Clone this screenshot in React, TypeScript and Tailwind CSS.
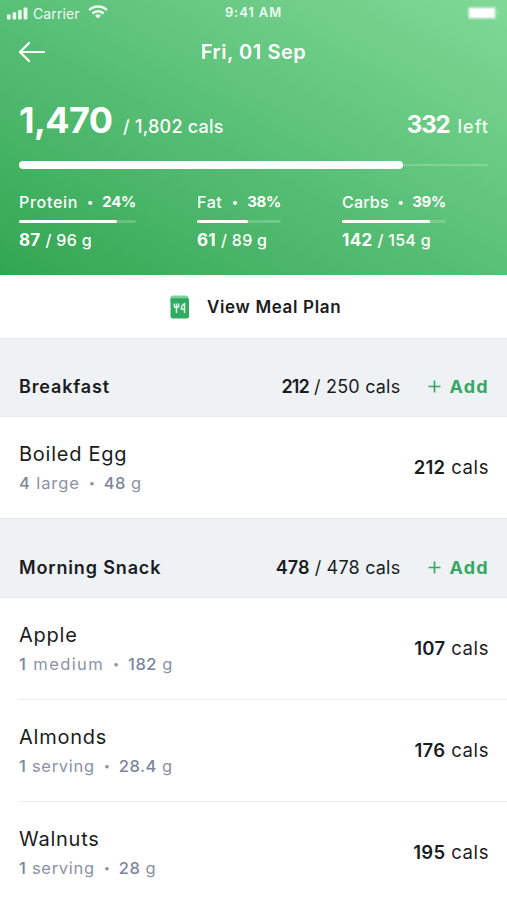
const macros = [
  { id: 1, name: 'Protein', percent: '24%', value: '87', goal: '/ 96 g', progress: 84, box: 'w-[117px] mr-[61px]', tracking: 'tracking-[0.7px]' },
  { id: 2, name: 'Fat', percent: '38%', value: '61', goal: '/ 89 g', progress: 61, box: 'w-[84px] mr-[61px]', tracking: 'tracking-[0.6px]' },
  { id: 3, name: 'Carbs', percent: '39%', value: '142', goal: '/ 154 g', progress: 85, box: 'w-[104px]', tracking: 'tracking-[0.2px]' },
];

const meals = [
  {
    id: 1,
    name: 'Breakfast',
    eaten: '212',
    goal: '/ 250 cals',
    header: 'h-[79px]',
    eatenTracking: 'tracking-[-0.8px]',
    foods: [
      { id: 1, name: 'Boiled Egg', count: '4', unit: 'large', grams: '48', cals: '212', tracking: 'tracking-[0.9px]' },
    ],
  },
  {
    id: 2,
    name: 'Morning Snack',
    eaten: '478',
    goal: '/ 478 cals',
    header: 'h-[80px]',
    eatenTracking: 'tracking-[0.1px]',
    foods: [
      { id: 1, name: 'Apple', count: '1', unit: 'medium', grams: '182', cals: '107', tracking: 'tracking-[1.4px]' },
      { id: 2, name: 'Almonds', count: '1', unit: 'serving', grams: '28.4', cals: '176', tracking: 'tracking-[0.7px]' },
      { id: 3, name: 'Walnuts', count: '1', unit: 'serving', grams: '28', cals: '195', tracking: 'tracking-[0.7px]' },
    ],
  },
];

function StatusBar() {
  return (
    <div className="grid h-[26px] grid-cols-3 items-center px-[7px] text-white/90">
      <div className="flex items-center">
        <svg width="21" height="13" viewBox="0 0 21 13" fill="currentColor">
          <rect x="0" y="7.5" width="3.6" height="5" rx="1" />
          <rect x="5.6" y="5.2" width="3.6" height="7.3" rx="1" />
          <rect x="11.1" y="2.9" width="3.6" height="9.6" rx="1" />
          <rect x="16.6" y="0.5" width="3.8" height="12" rx="1" />
        </svg>
        <span className="ml-[5px] text-[14px] tracking-[0.1px]">Carrier</span>
        <svg className="-mt-[2px] ml-[8px]" width="20" height="14" viewBox="0 0 20 14" fill="none" stroke="currentColor" strokeWidth="2.5">
          <path d="M1.2 5.2a12.4 12.4 0 0 1 17.6 0" />
          <path d="M4.4 8.5a7.9 7.9 0 0 1 11.2 0" />
          <path d="M10 13.6 7.1 10.7a4.1 4.1 0 0 1 5.8 0z" fill="currentColor" stroke="none" />
        </svg>
      </div>
      <span className="text-center text-[13px] font-semibold tracking-[0.9px]">9:41 AM</span>
      <svg className="justify-self-end" width="33" height="14" viewBox="0 0 33 14" fill="#fff">
        <rect x="0.5" y="0.5" width="29" height="13" rx="2.5" opacity="0.4" />
        <rect x="2.5" y="2.5" width="25" height="9" rx="1" />
        <path d="M31 5c1.4.5 1.4 3.5 0 4z" opacity="0.4" />
      </svg>
    </div>
  );
}

function Summary() {
  return (
    <header className="h-[275px] bg-linear-to-tr from-[#31a652] via-[#59c077] to-[#80d997] text-white">
      <StatusBar />
      <div className="relative flex h-[52px] items-center justify-center">
        <svg
          className="absolute left-[18px] top-[15px]"
          width="28"
          height="22"
          viewBox="0 0 28 22"
          fill="none"
          stroke="currentColor"
          strokeWidth="2.2"
          strokeLinecap="round"
          strokeLinejoin="round"
        >
          <path d="M26 11H2M11 2 2 11l9 9" />
        </svg>
        <h1 className="text-[20px] font-semibold tracking-[0.55px]">Fri, 01 Sep</h1>
      </div>

      <div className="flex h-[62px] items-baseline px-[19px] pt-[22px] leading-[40px]">
        <span className="w-[104px] text-[36px] font-bold tracking-[-0.6px]">1,470</span>
        <span className="text-[18px] font-medium tracking-[0.25px]">/ 1,802 cals</span>
        <span className="ml-auto text-[24px] font-bold tracking-[-1.1px]">332</span>
        <span className="-mr-px ml-[8px] text-[18px] font-medium tracking-[1px] text-white/90">left</span>
      </div>

      <div className="mx-[19px] mt-[21px] flex h-[8px] items-center">
        <div className="h-[8px] w-[384px] rounded-full bg-white" />
        <div className="h-[2px] flex-1 bg-white/20" />
      </div>

      <div className="flex px-[19px] pt-[21px]">
        {macros.map((macro) => (
          <div key={macro.id} className={macro.box}>
            <div className="flex items-center text-[16px] leading-[24px]">
              <span className={`font-medium ${macro.tracking}`}>{macro.name}</span>
              <span className="flex-1 text-center text-[12px]">•</span>
              <span className="text-[15px] font-bold tracking-[-0.3px]">{macro.percent}</span>
            </div>
            <div className="mt-[6px] h-[3px] rounded-full bg-white/20">
              <div className="h-[3px] rounded-full bg-white" style={{ width: `${macro.progress}%` }} />
            </div>
            <div className="flex items-baseline pt-[4px] leading-[26px]">
              <span className="text-[17px] font-bold tracking-[0.3px]">{macro.value}</span>
              <span className="ml-[5px] text-[16px] font-medium tracking-[0.3px]">{macro.goal}</span>
            </div>
          </div>
        ))}
      </div>
    </header>
  );
}

function MealPlanIcon() {
  return (
    <svg width="20" height="24" viewBox="0 0 20 24" fill="none">
      <rect x="0.5" y="0.5" width="18" height="8" rx="2.5" fill="#7fcf9c" />
      <path d="M0.5 3.2h17a1.5 1.5 0 0 1 1.5 1.5v16.8a2 2 0 0 1-2 2h-14a2.5 2.5 0 0 1-2.5-2.5z" fill="#2fac62" />
      <path d="M4.3 8.5v2a2.2 2.2 0 0 0 4.4 0v-2M6.5 8.5V18M14.5 18V8.7c-2 .9-3.2 3-3.2 5.6h3.2" stroke="#d9f5e3" strokeWidth="1.5" />
    </svg>
  );
}

export default function App() {
  return (
    <div className="h-[900px] w-[507px] overflow-hidden bg-white font-[Inter,sans-serif] text-[#1b1c1e]">
      <Summary />

      <button className="flex h-[63px] w-full items-center pl-[170px]">
        <MealPlanIcon />
        <span className="ml-[17px] pt-[2px] text-[17px] font-semibold tracking-[0.65px]">View Meal Plan</span>
      </button>

      {meals.map((meal) => (
        <section key={meal.id}>
          <div className={`flex items-center border-y border-[#e6e9ec] bg-[#eef2f5] pl-[19px] pr-[18px] pt-[18px] text-[18px] ${meal.header}`}>
            <h2 className="mr-auto font-semibold tracking-[0.85px]">{meal.name}</h2>
            <span className={`font-semibold ${meal.eatenTracking}`}>{meal.eaten}</span>
            <span className="ml-[5px] tracking-[0.2px]">{meal.goal}</span>
            <button className="ml-[28px] flex items-center text-[#36a864]">
              <svg width="13" height="13" viewBox="0 0 13 13" stroke="currentColor" strokeWidth="1.7">
                <path d="M6.5 0.5v12M0.5 6.5h12" />
              </svg>
              <span className="ml-[8px] font-bold tracking-[1.3px]">Add</span>
            </button>
          </div>

          <ul className="divide-y divide-[#e9ebee] pl-[19px]">
            {meal.foods.map((food) => (
              <li key={food.id} className="flex h-[102px] items-center justify-between pr-[18px] only:h-[101px]">
                <div>
                  <h3 className="pt-px text-[20px] leading-[30px] tracking-[0.75px]">{food.name}</h3>
                  <p className="flex text-[16.5px] leading-[29px] text-[#8a92a6]">
                    <span className={food.tracking}>
                      <span className="font-medium text-[#7c859d]">{food.count}</span> {food.unit}
                    </span>
                    <span className="w-[24px] text-center text-[11px]">•</span>
                    <span className="tracking-[0.5px]">
                      <span className="font-medium text-[#7c859d]">{food.grams}</span> g
                    </span>
                  </p>
                </div>
                <p className="text-[18.5px] tracking-[0.6px]">
                  <span className="font-semibold tracking-[0.3px]">{food.cals}</span> cals
                </p>
              </li>
            ))}
          </ul>
        </section>
      ))}
    </div>
  );
}
